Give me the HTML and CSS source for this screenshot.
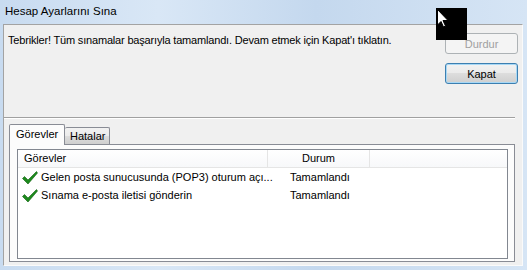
FILE: index.html
```html
<!DOCTYPE html>
<html lang="tr">
<head>
<meta charset="utf-8">
<title>Hesap Ayarlarını Sına</title>
<link rel="stylesheet" href="styles.css">
</head>
<body>
<div class="window">
  <div class="titlebar">Hesap Ayarlarını Sına</div>
  <div class="client">
    <div class="top">
      <p class="msg">Tebrikler! Tüm sınamalar başarıyla tamamlandı. Devam etmek için Kapat'ı tıklatın.</p>
      <div class="buttons">
        <button class="btn" disabled>Durdur</button>
        <button class="btn default">Kapat</button>
      </div>
    </div>
    <div class="sep"></div>
    <div class="tabs">
      <div class="tabstrip">
        <div class="tab active">Görevler</div>
        <div class="tab">Hatalar</div>
      </div>
      <div class="pane">
        <div class="list">
          <div class="header">
            <div class="hcol c1">Görevler</div>
            <div class="hcol c2">Durum</div>
            <div class="hcol c3"></div>
          </div>
          <div class="row">
            <div class="cell c1">
              <svg class="check" viewBox="0 0 16 14" width="16" height="14"><polygon points="0.5,7.5 2.5,5.5 6,9 14.5,0.5 15.5,2 6,13" fill="#1d8a1d" stroke="#0d5e0d" stroke-width="0.6" stroke-linejoin="round"/></svg>
              <span>Gelen posta sunucusunda (POP3) oturum açı...</span>
            </div>
            <div class="cell c2">Tamamlandı</div>
          </div>
          <div class="row">
            <div class="cell c1">
              <svg class="check" viewBox="0 0 16 14" width="16" height="14"><polygon points="0.5,7.5 2.5,5.5 6,9 14.5,0.5 15.5,2 6,13" fill="#1d8a1d" stroke="#0d5e0d" stroke-width="0.6" stroke-linejoin="round"/></svg>
              <span>Sınama e-posta iletisi gönderin</span>
            </div>
            <div class="cell c2">Tamamlandı</div>
          </div>
        </div>
      </div>
    </div>
  </div>
  <div class="cursor">
    <svg viewBox="0 0 12 19" width="12" height="19"><path d="M0.5 0.5 L0.5 16 L4 12.5 L6.5 18 L8.5 17 L6 11.5 L11 11.5 Z" fill="#fff" stroke="#000" stroke-width="1"/></svg>
  </div>
</div>
</body>
</html>
```

FILE: styles.css
```css
* { box-sizing: border-box; }
html, body { margin: 0; padding: 0; }
body {
  font-family: "Liberation Sans", Arial, sans-serif;
  font-size: 11px;
  color: #000;
  background: #c9dcf0;
}
.window {
  position: relative;
  width: 527px;
  height: 270px;
  display: flex;
  flex-direction: column;
  padding: 0 4px 4px 3px;
  background: linear-gradient(90deg, #c8dbf0 0%, #d9e7f6 30%, #c4d8ee 60%, #d6e5f5 100%);
}
.titlebar {
  height: 24px;
  line-height: 22px;
  padding-left: 2px;
  font-size: 11.5px;
  white-space: nowrap;
}
.client {
  flex: 1;
  display: flex;
  flex-direction: column;
  background: #f0f0f0;
  border-top: 1px solid #a3a3a3;
  border-left: 1px solid #a3a3a3;
  border-right: 1px solid #fafafa;
  border-bottom: 1px solid #fafafa;
}
.top {
  height: 92px;
  display: flex;
  justify-content: space-between;
  padding: 0 4px 0 4px;
}
.msg {
  margin: 0;
  padding-top: 7px;
  line-height: 16px;
  letter-spacing: -0.18px;
  white-space: nowrap;
}
.buttons {
  display: flex;
  flex-direction: column;
  gap: 9px;
  padding-top: 8px;
}
.btn {
  width: 73px;
  height: 21px;
  font: inherit;
  padding: 0;
  border-radius: 3px;
  color: #000;
  border: 1px solid #707070;
  background: linear-gradient(180deg, #f2f2f2 0%, #ebebeb 45%, #dddddd 50%, #cfcfcf 100%);
  box-shadow: inset 0 0 0 1px rgba(255,255,255,0.7);
}
.btn:disabled {
  color: #a0a0a0;
  border-color: #adb2b5;
  background: #f4f4f4;
  box-shadow: none;
}
.btn.default {
  border-color: #3c7fb1;
  box-shadow: inset 0 0 0 1px #a8d8f5;
}
.sep {
  height: 2px;
  margin-right: 7px;
  border-top: 1px solid #a0a0a0;
  border-bottom: 1px solid #ffffff;
}
.tabs {
  flex: 1;
  display: flex;
  flex-direction: column;
  margin: 5px 7px 3px 5px;
}
.tabstrip {
  display: flex;
  align-items: flex-end;
  height: 20px;
  position: relative;
  z-index: 1;
}
.tab {
  height: 17px;
  line-height: 16px;
  padding: 0 5px;
  border: 1px solid #898c95;
  border-bottom: none;
  border-left: none;
  border-radius: 2px 2px 0 0;
  background: linear-gradient(180deg, #f2f2f2 0%, #ebebeb 50%, #dddddd 50%, #cfcfcf 100%);
  width: 45px;
  white-space: nowrap;
}
.tab.active {
  height: 21px;
  margin-bottom: -1px;
  width: 56px;
  padding-left: 6px;
  line-height: 19px;
  border-left: 1px solid #898c95;
  background: #fcfcfc;
}
.pane {
  flex: 1;
  display: flex;
  border: 1px solid #898c95;
  background: #fcfcfc;
  padding: 4px 6px 2px 7px;
}
.list {
  flex: 1;
  border: 1px solid #828790;
  background: #fff;
}
.header {
  display: flex;
  height: 18px;
  line-height: 17px;
  border-bottom: 1px solid #e5e5e5;
  background: linear-gradient(180deg, #ffffff 0%, #f7f8fa 100%);
}
.hcol { border-right: 1px solid #e5e5e5; white-space: nowrap; }
.c1 { width: 250px; padding-left: 6px; }
.hcol.c2 { width: 102px; text-align: center; }
.hcol.c3 { flex: 1; border-right: none; }
.row {
  display: flex;
  height: 18px;
  align-items: center;
}
.cell { white-space: nowrap; display: flex; align-items: center; }
.cell.c1 { padding-left: 4px; gap: 3px; }
.cell.c2 { padding-left: 22px; }
.check { display: block; flex-shrink: 0; margin-top: 1px; }
.cursor {
  position: absolute;
  left: 436px;
  top: 8px;
  width: 31px;
  height: 32px;
  background: #000;
  padding: 1px 0 0 1px;
}
.cursor svg { display: block; }
```
